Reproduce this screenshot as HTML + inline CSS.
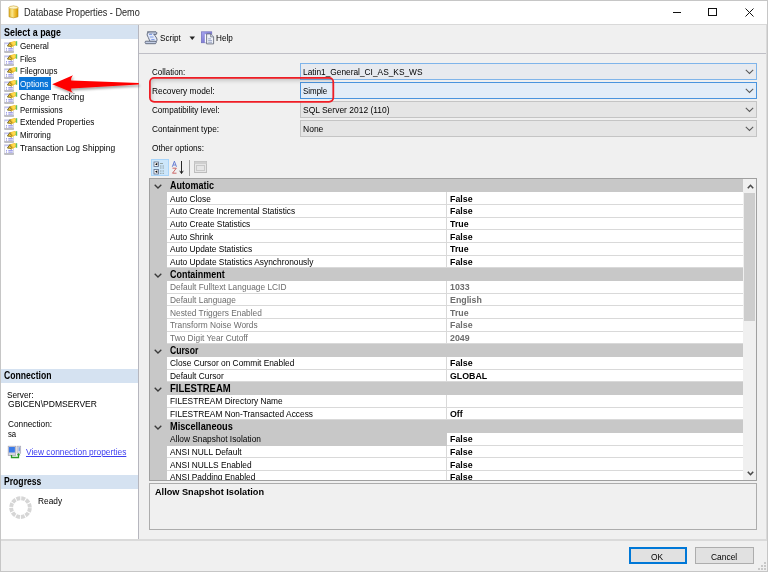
<!DOCTYPE html>
<html><head><meta charset="utf-8"><style>
*{margin:0;padding:0;box-sizing:border-box}
html,body{width:768px;height:572px;overflow:hidden;background:#f0f0f0;font-family:"Liberation Sans", sans-serif;color:#000;position:relative}
.a{position:absolute}
.t{position:absolute;white-space:nowrap;line-height:12px;transform-origin:0 0;color:#000}
.hdr{position:absolute;left:1px;width:137px;height:14px;background:#d5e2f1}
.combo{position:absolute;left:300px;width:457px;height:17px;border:1px solid #c4c4c4;background:#e5e5e5}
.combo.c1{border-color:#7eb4ea;background:#e7eaef}
.combo.c2{border-color:#4a94de;background:#e3edf8}
.combo svg{position:absolute;right:2px;top:5px}
#grid{position:absolute;left:149px;top:178px;width:608px;height:303px;border:1px solid #a0a0a0;background:#c8c8c8;overflow:hidden}
.cat{position:absolute;left:0;width:593px;height:12.7px;background:#c8c8c8}
.row{position:absolute;left:17px;width:576px;height:12.7px}
.row .lab{position:absolute;left:0;top:0;width:280px;height:100%;background:#fff;border-bottom:1px solid #d9d9d9;border-right:1px solid #d9d9d9}
.row .val{position:absolute;left:280px;top:0;width:296px;height:100%;background:#fff;border-bottom:1px solid #d9d9d9}
.row.sel .lab{background:#c8c8c8;border-bottom-color:#c8c8c8;border-right-color:#c8c8c8}
#sb{position:absolute;left:593px;top:0;width:14px;height:301px;background:#f0f0f0}
.btn{position:absolute;top:547px;height:17px;border:1px solid #adadad;background:#e1e1e1}
</style></head><body>
<div class="a" style="left:0;top:0;width:768px;height:572px;border:1px solid #c6c6c6"></div>
<svg class="a" style="left:757px;top:562px" width="10" height="9"><g fill="#c8c8c8"><rect x="7" y="0" width="2" height="2"/><rect x="4" y="3" width="2" height="2"/><rect x="7" y="3" width="2" height="2"/><rect x="1" y="6" width="2" height="2"/><rect x="4" y="6" width="2" height="2"/><rect x="7" y="6" width="2" height="2"/></g></svg>
<div class="a" style="left:1px;top:1px;width:766px;height:23px;background:#fff"></div>
<div class="a" style="left:1px;top:24px;width:766px;height:1px;background:#d9d9d9"></div>
<svg class="a" style="left:8px;top:5px" width="11" height="14" viewBox="0 0 11 14"><defs><linearGradient id="gd" x1="0" x2="1"><stop offset="0" stop-color="#e0b020"/><stop offset="0.35" stop-color="#fbe890"/><stop offset="0.6" stop-color="#f2c440"/><stop offset="1" stop-color="#d89a00"/></linearGradient></defs><path d="M1 2.2 Q5.5 0.2 10 2.2 V11.8 Q5.5 13.8 1 11.8 Z" fill="url(#gd)" stroke="#b88a10" stroke-width="0.6"/><ellipse cx="5.5" cy="2.4" rx="4.4" ry="1.5" fill="#fff6c8" stroke="#c09a30" stroke-width="0.4"/></svg>
<div class="t" style="left:23.5px;top:7px;font-size:10px;transform:scaleX(0.9139);color:#1e1e1e">Database Properties - Demo</div>
<div class="a" style="left:673px;top:12px;width:8px;height:1px;background:#111"></div>
<div class="a" style="left:708px;top:8px;width:9px;height:8px;border:1px solid #111"></div>
<svg class="a" style="left:745px;top:8px" width="9" height="9"><path d="M0.5 0.5 L8.5 8.5 M8.5 0.5 L0.5 8.5" stroke="#111" stroke-width="1"/></svg>

<div class="a" style="left:1px;top:25px;width:137px;height:514px;background:#fff"></div>
<div class="a" style="left:138px;top:25px;width:1px;height:515px;background:#b6b6be"></div>
<div class="a" style="left:1px;top:539px;width:766px;height:2px;background:#dadada"></div>
<div class="hdr" style="top:25px"></div>
<div class="t" style="left:3.5px;top:27px;font-size:10.2px;transform:scaleX(0.8743);font-weight:bold">Select a page</div>
<div class="a" style="left:4px;top:39px"><svg width="15" height="13" viewBox="0 0 15 13"><rect x="0.4" y="2.9" width="9.2" height="9.1" fill="#fdfdff" stroke="#cfd0da" stroke-width="0.8"/><rect x="0.5" y="2.7" width="4.5" height="1.5" fill="#c4c4f2"/><path d="M0.4 12 H9.8" stroke="#909096" stroke-width="1"/><path d="M2 8.6 H3 M4.3 8.6 H8.8 M2 10.3 H3 M4.3 10.3 H8.8" stroke="#a0a0ea" stroke-width="1.1"/><path d="M3.4 6 L6.2 2.2 L10.6 0.9 L12.7 2 L12.5 4.7 L9.6 6.3 L7.8 7.2 Z" fill="#f4c22e"/><path d="M3.4 6 L6.2 2.2 M3.4 6 L5.5 6.3 L7.8 7.2 M5.6 3 L8 5.8" fill="none" stroke="#6e6a30" stroke-width="0.9"/><path d="M8 2.6 L10.8 1.6 L12 3.2 L10 5.2 L8.6 4.8 Z" fill="#ffdc50"/><rect x="11.8" y="1.2" width="1.4" height="4.6" fill="#62c262"/></svg></div><div class="t" style="left:20.3px;top:40px;font-size:9.4px;transform:scaleX(0.8673)">General</div>
<div class="a" style="left:4px;top:52px"><svg width="15" height="13" viewBox="0 0 15 13"><rect x="0.4" y="2.9" width="9.2" height="9.1" fill="#fdfdff" stroke="#cfd0da" stroke-width="0.8"/><rect x="0.5" y="2.7" width="4.5" height="1.5" fill="#c4c4f2"/><path d="M0.4 12 H9.8" stroke="#909096" stroke-width="1"/><path d="M2 8.6 H3 M4.3 8.6 H8.8 M2 10.3 H3 M4.3 10.3 H8.8" stroke="#a0a0ea" stroke-width="1.1"/><path d="M3.4 6 L6.2 2.2 L10.6 0.9 L12.7 2 L12.5 4.7 L9.6 6.3 L7.8 7.2 Z" fill="#f4c22e"/><path d="M3.4 6 L6.2 2.2 M3.4 6 L5.5 6.3 L7.8 7.2 M5.6 3 L8 5.8" fill="none" stroke="#6e6a30" stroke-width="0.9"/><path d="M8 2.6 L10.8 1.6 L12 3.2 L10 5.2 L8.6 4.8 Z" fill="#ffdc50"/><rect x="11.8" y="1.2" width="1.4" height="4.6" fill="#62c262"/></svg></div><div class="t" style="left:20.3px;top:53px;font-size:9.4px;transform:scaleX(0.8163)">Files</div>
<div class="a" style="left:4px;top:65px"><svg width="15" height="13" viewBox="0 0 15 13"><rect x="0.4" y="2.9" width="9.2" height="9.1" fill="#fdfdff" stroke="#cfd0da" stroke-width="0.8"/><rect x="0.5" y="2.7" width="4.5" height="1.5" fill="#c4c4f2"/><path d="M0.4 12 H9.8" stroke="#909096" stroke-width="1"/><path d="M2 8.6 H3 M4.3 8.6 H8.8 M2 10.3 H3 M4.3 10.3 H8.8" stroke="#a0a0ea" stroke-width="1.1"/><path d="M3.4 6 L6.2 2.2 L10.6 0.9 L12.7 2 L12.5 4.7 L9.6 6.3 L7.8 7.2 Z" fill="#f4c22e"/><path d="M3.4 6 L6.2 2.2 M3.4 6 L5.5 6.3 L7.8 7.2 M5.6 3 L8 5.8" fill="none" stroke="#6e6a30" stroke-width="0.9"/><path d="M8 2.6 L10.8 1.6 L12 3.2 L10 5.2 L8.6 4.8 Z" fill="#ffdc50"/><rect x="11.8" y="1.2" width="1.4" height="4.6" fill="#62c262"/></svg></div><div class="t" style="left:20.3px;top:65px;font-size:9.4px;transform:scaleX(0.8545)">Filegroups</div>
<div class="a" style="left:4px;top:78px"><svg width="15" height="13" viewBox="0 0 15 13"><rect x="0.4" y="2.9" width="9.2" height="9.1" fill="#fdfdff" stroke="#cfd0da" stroke-width="0.8"/><rect x="0.5" y="2.7" width="4.5" height="1.5" fill="#c4c4f2"/><path d="M0.4 12 H9.8" stroke="#909096" stroke-width="1"/><path d="M2 8.6 H3 M4.3 8.6 H8.8 M2 10.3 H3 M4.3 10.3 H8.8" stroke="#a0a0ea" stroke-width="1.1"/><path d="M3.4 6 L6.2 2.2 L10.6 0.9 L12.7 2 L12.5 4.7 L9.6 6.3 L7.8 7.2 Z" fill="#f4c22e"/><path d="M3.4 6 L6.2 2.2 M3.4 6 L5.5 6.3 L7.8 7.2 M5.6 3 L8 5.8" fill="none" stroke="#6e6a30" stroke-width="0.9"/><path d="M8 2.6 L10.8 1.6 L12 3.2 L10 5.2 L8.6 4.8 Z" fill="#ffdc50"/><rect x="11.8" y="1.2" width="1.4" height="4.6" fill="#62c262"/></svg></div><div class="a" style="left:19px;top:77px;width:32px;height:13px;background:#0b76d8"></div><div class="t" style="left:20.3px;top:78px;font-size:9.4px;transform:scaleX(0.8736);color:#fff">Options</div>
<div class="a" style="left:4px;top:90px"><svg width="15" height="13" viewBox="0 0 15 13"><rect x="0.4" y="2.9" width="9.2" height="9.1" fill="#fdfdff" stroke="#cfd0da" stroke-width="0.8"/><rect x="0.5" y="2.7" width="4.5" height="1.5" fill="#c4c4f2"/><path d="M0.4 12 H9.8" stroke="#909096" stroke-width="1"/><path d="M2 8.6 H3 M4.3 8.6 H8.8 M2 10.3 H3 M4.3 10.3 H8.8" stroke="#a0a0ea" stroke-width="1.1"/><path d="M3.4 6 L6.2 2.2 L10.6 0.9 L12.7 2 L12.5 4.7 L9.6 6.3 L7.8 7.2 Z" fill="#f4c22e"/><path d="M3.4 6 L6.2 2.2 M3.4 6 L5.5 6.3 L7.8 7.2 M5.6 3 L8 5.8" fill="none" stroke="#6e6a30" stroke-width="0.9"/><path d="M8 2.6 L10.8 1.6 L12 3.2 L10 5.2 L8.6 4.8 Z" fill="#ffdc50"/><rect x="11.8" y="1.2" width="1.4" height="4.6" fill="#62c262"/></svg></div><div class="t" style="left:20.3px;top:91px;font-size:9.4px;transform:scaleX(0.9077)">Change Tracking</div>
<div class="a" style="left:4px;top:103px"><svg width="15" height="13" viewBox="0 0 15 13"><rect x="0.4" y="2.9" width="9.2" height="9.1" fill="#fdfdff" stroke="#cfd0da" stroke-width="0.8"/><rect x="0.5" y="2.7" width="4.5" height="1.5" fill="#c4c4f2"/><path d="M0.4 12 H9.8" stroke="#909096" stroke-width="1"/><path d="M2 8.6 H3 M4.3 8.6 H8.8 M2 10.3 H3 M4.3 10.3 H8.8" stroke="#a0a0ea" stroke-width="1.1"/><path d="M3.4 6 L6.2 2.2 L10.6 0.9 L12.7 2 L12.5 4.7 L9.6 6.3 L7.8 7.2 Z" fill="#f4c22e"/><path d="M3.4 6 L6.2 2.2 M3.4 6 L5.5 6.3 L7.8 7.2 M5.6 3 L8 5.8" fill="none" stroke="#6e6a30" stroke-width="0.9"/><path d="M8 2.6 L10.8 1.6 L12 3.2 L10 5.2 L8.6 4.8 Z" fill="#ffdc50"/><rect x="11.8" y="1.2" width="1.4" height="4.6" fill="#62c262"/></svg></div><div class="t" style="left:20.3px;top:104px;font-size:9.4px;transform:scaleX(0.8342)">Permissions</div>
<div class="a" style="left:4px;top:116px"><svg width="15" height="13" viewBox="0 0 15 13"><rect x="0.4" y="2.9" width="9.2" height="9.1" fill="#fdfdff" stroke="#cfd0da" stroke-width="0.8"/><rect x="0.5" y="2.7" width="4.5" height="1.5" fill="#c4c4f2"/><path d="M0.4 12 H9.8" stroke="#909096" stroke-width="1"/><path d="M2 8.6 H3 M4.3 8.6 H8.8 M2 10.3 H3 M4.3 10.3 H8.8" stroke="#a0a0ea" stroke-width="1.1"/><path d="M3.4 6 L6.2 2.2 L10.6 0.9 L12.7 2 L12.5 4.7 L9.6 6.3 L7.8 7.2 Z" fill="#f4c22e"/><path d="M3.4 6 L6.2 2.2 M3.4 6 L5.5 6.3 L7.8 7.2 M5.6 3 L8 5.8" fill="none" stroke="#6e6a30" stroke-width="0.9"/><path d="M8 2.6 L10.8 1.6 L12 3.2 L10 5.2 L8.6 4.8 Z" fill="#ffdc50"/><rect x="11.8" y="1.2" width="1.4" height="4.6" fill="#62c262"/></svg></div><div class="t" style="left:20.3px;top:116px;font-size:9.4px;transform:scaleX(0.8747)">Extended Properties</div>
<div class="a" style="left:4px;top:129px"><svg width="15" height="13" viewBox="0 0 15 13"><rect x="0.4" y="2.9" width="9.2" height="9.1" fill="#fdfdff" stroke="#cfd0da" stroke-width="0.8"/><rect x="0.5" y="2.7" width="4.5" height="1.5" fill="#c4c4f2"/><path d="M0.4 12 H9.8" stroke="#909096" stroke-width="1"/><path d="M2 8.6 H3 M4.3 8.6 H8.8 M2 10.3 H3 M4.3 10.3 H8.8" stroke="#a0a0ea" stroke-width="1.1"/><path d="M3.4 6 L6.2 2.2 L10.6 0.9 L12.7 2 L12.5 4.7 L9.6 6.3 L7.8 7.2 Z" fill="#f4c22e"/><path d="M3.4 6 L6.2 2.2 M3.4 6 L5.5 6.3 L7.8 7.2 M5.6 3 L8 5.8" fill="none" stroke="#6e6a30" stroke-width="0.9"/><path d="M8 2.6 L10.8 1.6 L12 3.2 L10 5.2 L8.6 4.8 Z" fill="#ffdc50"/><rect x="11.8" y="1.2" width="1.4" height="4.6" fill="#62c262"/></svg></div><div class="t" style="left:20.3px;top:129px;font-size:9.4px;transform:scaleX(0.8307)">Mirroring</div>
<div class="a" style="left:4px;top:141px"><svg width="15" height="13" viewBox="0 0 15 13"><rect x="0.4" y="2.9" width="9.2" height="9.1" fill="#fdfdff" stroke="#cfd0da" stroke-width="0.8"/><rect x="0.5" y="2.7" width="4.5" height="1.5" fill="#c4c4f2"/><path d="M0.4 12 H9.8" stroke="#909096" stroke-width="1"/><path d="M2 8.6 H3 M4.3 8.6 H8.8 M2 10.3 H3 M4.3 10.3 H8.8" stroke="#a0a0ea" stroke-width="1.1"/><path d="M3.4 6 L6.2 2.2 L10.6 0.9 L12.7 2 L12.5 4.7 L9.6 6.3 L7.8 7.2 Z" fill="#f4c22e"/><path d="M3.4 6 L6.2 2.2 M3.4 6 L5.5 6.3 L7.8 7.2 M5.6 3 L8 5.8" fill="none" stroke="#6e6a30" stroke-width="0.9"/><path d="M8 2.6 L10.8 1.6 L12 3.2 L10 5.2 L8.6 4.8 Z" fill="#ffdc50"/><rect x="11.8" y="1.2" width="1.4" height="4.6" fill="#62c262"/></svg></div><div class="t" style="left:20.3px;top:142px;font-size:9.4px;transform:scaleX(0.897)">Transaction Log Shipping</div>
<div class="hdr" style="top:369px"></div>
<div class="t" style="left:3.5px;top:370px;font-size:10.2px;transform:scaleX(0.8468);font-weight:bold">Connection</div>
<div class="t" style="left:7.2px;top:389px;font-size:9.4px;transform:scaleX(0.8813)">Server:</div>
<div class="t" style="left:8px;top:398px;font-size:9.4px;transform:scaleX(0.91)">GBICEN\PDMSERVER</div>
<div class="t" style="left:8px;top:418px;font-size:9.4px;transform:scaleX(0.8811)">Connection:</div>
<div class="t" style="left:8px;top:428px;font-size:9.4px;transform:scaleX(0.826)">sa</div>
<svg class="a" style="left:7px;top:445px" width="15" height="14" viewBox="0 0 15 14"><rect x="1.2" y="1.2" width="7.5" height="9.4" fill="#d6d6de" stroke="#a4a4b4" stroke-width="0.7"/><rect x="1.9" y="2" width="6" height="5.5" fill="#3a7ae8"/><rect x="10" y="1.2" width="3.7" height="7" fill="#dcdce6" stroke="#a8a8b8" stroke-width="0.7"/><rect x="11.6" y="2.2" width="1.3" height="4" fill="#7aa0e0"/><path d="M4.5 10 V12.5 H11.5 V9.5" fill="none" stroke="#2a9a2a" stroke-width="1.3"/><path d="M9.6 10.2 L11.5 8 L13.4 10.2 Z" fill="#2a9a2a"/></svg>
<div class="t" style="left:26.3px;top:446px;font-size:9.4px;transform:scaleX(0.8927);color:#3c3cf0;text-decoration:underline">View connection properties</div>
<div class="hdr" style="top:475px"></div>
<div class="t" style="left:3.5px;top:476px;font-size:10.2px;transform:scaleX(0.8458);font-weight:bold">Progress</div>
<svg class="a" style="left:8px;top:495px" width="26" height="26" viewBox="0 0 26 26"><circle cx="12.5" cy="12.6" r="9.35" fill="none" stroke="#d6d6d6" stroke-width="3.9" stroke-dasharray="3.9 0.996" stroke-dashoffset="-0.5"/></svg>
<div class="t" style="left:37.8px;top:495px;font-size:9.4px;transform:scaleX(0.887)">Ready</div>

<div class="a" style="left:766px;top:25px;width:1px;height:515px;background:#dadada"></div>
<div class="a" style="left:139px;top:53px;width:627px;height:1px;background:#bfbfc6"></div>
<svg class="a" style="left:144px;top:30px" width="15" height="15" viewBox="0 0 15 15"><path d="M3.5 2.5 Q2.3 5 4.3 7.5 L6 11.5 H12.5 Q13.6 10 12.6 8 L9.5 3.5 Z" fill="#e2e9fa" stroke="#5b6478" stroke-width="0.9"/><path d="M3.2 1.8 H12 Q13.8 2.6 12.3 4.4 H9.6" fill="#b8c4dc" stroke="#5b6478" stroke-width="0.9"/><path d="M1.5 11.2 H11.5 Q13 12.5 11.5 13.7 H1.7 Q0.6 12.4 1.5 11.2 Z" fill="#c4cfe6" stroke="#5b6478" stroke-width="0.9"/><path d="M5 4.5 H8 M5.8 7 H9.5 M7.3 9.5 H10.5" stroke="#6a8ae0" stroke-width="0.8"/></svg>
<div class="t" style="left:160.2px;top:32px;font-size:9.4px;transform:scaleX(0.8657)">Script</div>
<svg class="a" style="left:189px;top:36px" width="7" height="5"><path d="M0.5 0.5 H6 L3.25 4 Z" fill="#222"/></svg>
<svg class="a" style="left:200px;top:30px" width="15" height="15" viewBox="0 0 15 15"><defs><linearGradient id="gb" x1="0" y1="0" x2="1" y2="1"><stop offset="0" stop-color="#a8a6f0"/><stop offset="1" stop-color="#6462c0"/></linearGradient></defs><rect x="1.3" y="1.8" width="10.5" height="11" fill="url(#gb)" stroke="#6a68b8" stroke-width="0.6"/><rect x="4.8" y="4.2" width="2.6" height="8.4" fill="#fafaff"/><path d="M6.6 3.9 H10.6 L13.6 6.9 V13.9 H6.6 Z" fill="#eef1f8" stroke="#596070" stroke-width="0.8"/><path d="M10.6 3.9 V6.9 H13.6" fill="#d0d6e4" stroke="#596070" stroke-width="0.6"/><path d="M8.2 8.8 H11 M8.2 10.6 H12 M8.2 12.3 H12" stroke="#8a96bc" stroke-width="0.8"/></svg>
<div class="t" style="left:215.8px;top:32px;font-size:9.4px;transform:scaleX(0.869)">Help</div>

<div class="t" style="left:151.5px;top:66px;font-size:9.4px;transform:scaleX(0.8498)">Collation:</div>
<div class="t" style="left:152px;top:85px;font-size:9.4px;transform:scaleX(0.8905)">Recovery model:</div>
<div class="t" style="left:151.5px;top:104px;font-size:9.4px;transform:scaleX(0.8652)">Compatibility level:</div>
<div class="t" style="left:151.5px;top:123px;font-size:9.4px;transform:scaleX(0.8809)">Containment type:</div>
<div class="t" style="left:151.5px;top:142px;font-size:9.4px;transform:scaleX(0.8842)">Other options:</div>
<div class="combo c1" style="top:63px"><svg width="9" height="6"><path d="M0.8 0.8 L4.5 4.4 L8.2 0.8" fill="none" stroke="#5a5a5a" stroke-width="1.05"/></svg></div>
<div class="combo c2" style="top:82px"><svg width="9" height="6"><path d="M0.8 0.8 L4.5 4.4 L8.2 0.8" fill="none" stroke="#5a5a5a" stroke-width="1.05"/></svg></div>
<div class="combo" style="top:101px"><svg width="9" height="6"><path d="M0.8 0.8 L4.5 4.4 L8.2 0.8" fill="none" stroke="#5a5a5a" stroke-width="1.05"/></svg></div>
<div class="combo" style="top:120px"><svg width="9" height="6"><path d="M0.8 0.8 L4.5 4.4 L8.2 0.8" fill="none" stroke="#5a5a5a" stroke-width="1.05"/></svg></div>
<div class="t" style="left:302.8px;top:66px;font-size:9.4px;transform:scaleX(0.8887)">Latin1_General_CI_AS_KS_WS</div>
<div class="t" style="left:303px;top:85px;font-size:9.4px;transform:scaleX(0.8458)">Simple</div>
<div class="t" style="left:302.8px;top:104px;font-size:9.4px;transform:scaleX(0.9029)">SQL Server 2012 (110)</div>
<div class="t" style="left:302.8px;top:123px;font-size:9.4px;transform:scaleX(0.9079)">None</div>
<div class="a" style="left:150px;top:78px;width:183px;height:23.5px;border-radius:4px;box-shadow:inset 1.5px 2.5px 4px rgba(0,0,0,0.2)"></div><svg class="a" style="left:145px;top:73px" width="195" height="35"><rect x="4.9" y="4.9" width="183.4" height="23.9" rx="4.2" fill="none" stroke="#ef1d25" stroke-width="1.8"/></svg>
<svg class="a" style="left:50px;top:73px" width="95" height="24" viewBox="50 73 95 24"><defs><filter id="sh" x="-10%" y="-30%" width="130%" height="180%"><feDropShadow dx="1" dy="2" stdDeviation="1.2" flood-color="#000" flood-opacity="0.35"/></filter></defs><path d="M52.2 84.3 L73 75.2 Q70.5 78.5 71.2 80.6 L138.8 83 L138.8 84.6 L71.2 88.5 Q70.5 90.5 73 92.8 Z" fill="#ff0000" filter="url(#sh)"/></svg>

<div class="a" style="left:151px;top:159px;width:18px;height:17px;background:#cce6fb;border:1px solid #a8d4fa"></div>
<svg class="a" style="left:153px;top:161px" width="14" height="14" viewBox="0 0 14 14"><rect x="1" y="1" width="4.5" height="4.5" fill="#fff" stroke="#5a6a8a" stroke-width="0.8"/><path d="M2 3.2 L4.3 1.8 V4.6 Z" fill="#000"/><rect x="1" y="8.5" width="4.5" height="4.5" fill="#fff" stroke="#5a6a8a" stroke-width="0.8"/><path d="M2 10.7 L4.3 9.3 V12.1 Z" fill="#000"/><path d="M7 2.5 H10 M7 5 H8.5 M9.5 5 H11 M7 7 H8.5 M9.5 7 H11 M7 10 H8.5 M9.5 10 H11 M7 12.3 H8.5 M9.5 12.3 H11" stroke="#8a9a9a" stroke-width="0.9"/></svg>
<svg class="a" style="left:171px;top:160px" width="14" height="15" viewBox="0 0 14 15"><path d="M1.3 6.8 L3.4 1.2 L5.5 6.8 M2.1 5 H4.7" fill="none" stroke="#4a66cc" stroke-width="0.8"/><path d="M1.5 8.2 H5.3 L1.5 13.2 H5.5" fill="none" stroke="#c44848" stroke-width="0.8"/><path d="M10.5 1 V13" stroke="#111" stroke-width="0.9"/><path d="M8.8 10.8 L10.5 13.6 L12.2 10.8" fill="none" stroke="#111" stroke-width="0.9"/></svg>
<div class="a" style="left:189px;top:160px;width:1px;height:16px;background:#a4a4a4"></div>
<svg class="a" style="left:194px;top:161px" width="14" height="13" viewBox="0 0 14 13"><rect x="0.5" y="0.5" width="12" height="11" fill="#e6e6e6" stroke="#bdbdbd"/><rect x="0.5" y="0.5" width="12" height="2.5" fill="#cfcfcf"/><rect x="2.5" y="4.5" width="8" height="5" fill="none" stroke="#c8c8c8"/></svg>
<div id="grid">
<div class="cat" style="top:1px;height:12px"></div>
<div class="row" style="top:13px;height:13px"><span class="lab"></span><span class="val"></span></div>
<div class="row" style="top:26px;height:13px"><span class="lab"></span><span class="val"></span></div>
<div class="row" style="top:39px;height:12px"><span class="lab"></span><span class="val"></span></div>
<div class="row" style="top:51px;height:13px"><span class="lab"></span><span class="val"></span></div>
<div class="row" style="top:64px;height:13px"><span class="lab"></span><span class="val"></span></div>
<div class="row" style="top:77px;height:12px"><span class="lab"></span><span class="val"></span></div>
<div class="cat" style="top:89px;height:13px"></div>
<div class="row" style="top:102px;height:13px"><span class="lab"></span><span class="val"></span></div>
<div class="row" style="top:115px;height:12px"><span class="lab"></span><span class="val"></span></div>
<div class="row" style="top:127px;height:13px"><span class="lab"></span><span class="val"></span></div>
<div class="row" style="top:140px;height:13px"><span class="lab"></span><span class="val"></span></div>
<div class="row" style="top:153px;height:12px"><span class="lab"></span><span class="val"></span></div>
<div class="cat" style="top:165px;height:13px"></div>
<div class="row" style="top:178px;height:13px"><span class="lab"></span><span class="val"></span></div>
<div class="row" style="top:191px;height:12px"><span class="lab"></span><span class="val"></span></div>
<div class="cat" style="top:203px;height:13px"></div>
<div class="row" style="top:216px;height:13px"><span class="lab"></span><span class="val"></span></div>
<div class="row" style="top:229px;height:12px"><span class="lab"></span><span class="val"></span></div>
<div class="cat" style="top:241px;height:13px"></div>
<div class="row sel" style="top:254px;height:13px"><span class="lab"></span><span class="val"></span></div>
<div class="row" style="top:267px;height:12px"><span class="lab"></span><span class="val"></span></div>
<div class="row" style="top:279px;height:13px"><span class="lab"></span><span class="val"></span></div>
<div class="row" style="top:292px;height:13px"><span class="lab"></span><span class="val"></span></div>
<svg class="a" style="left:4px;top:5px" width="8" height="5"><path d="M0.7 0.7 L4 4 L7.3 0.7" fill="none" stroke="#3a3a3a" stroke-width="1.3"/></svg>
<div class="t" style="left:19.80000000000001px;top:1px;font-size:10.2px;transform:scaleX(0.8823);font-weight:bold">Automatic</div>
<div class="t" style="left:19.80000000000001px;top:14px;font-size:9.4px;transform:scaleX(0.89)">Auto Close</div>
<div class="t" style="left:300px;top:14px;font-size:9.4px;transform:scaleX(0.9403);font-weight:bold">False</div>
<div class="t" style="left:19.80000000000001px;top:26px;font-size:9.4px;transform:scaleX(0.8825)">Auto Create Incremental Statistics</div>
<div class="t" style="left:300px;top:26px;font-size:9.4px;transform:scaleX(0.9403);font-weight:bold">False</div>
<div class="t" style="left:19.80000000000001px;top:39px;font-size:9.4px;transform:scaleX(0.89)">Auto Create Statistics</div>
<div class="t" style="left:300px;top:39px;font-size:9.4px;transform:scaleX(0.9403);font-weight:bold">True</div>
<div class="t" style="left:19.80000000000001px;top:52px;font-size:9.4px;transform:scaleX(0.89)">Auto Shrink</div>
<div class="t" style="left:300px;top:52px;font-size:9.4px;transform:scaleX(0.9403);font-weight:bold">False</div>
<div class="t" style="left:19.80000000000001px;top:64px;font-size:9.4px;transform:scaleX(0.89)">Auto Update Statistics</div>
<div class="t" style="left:300px;top:64px;font-size:9.4px;transform:scaleX(0.9403);font-weight:bold">True</div>
<div class="t" style="left:19.80000000000001px;top:77px;font-size:9.4px;transform:scaleX(0.893)">Auto Update Statistics Asynchronously</div>
<div class="t" style="left:300px;top:77px;font-size:9.4px;transform:scaleX(0.9403);font-weight:bold">False</div>
<svg class="a" style="left:4px;top:94px" width="8" height="5"><path d="M0.7 0.7 L4 4 L7.3 0.7" fill="none" stroke="#3a3a3a" stroke-width="1.3"/></svg>
<div class="t" style="left:19.80000000000001px;top:90px;font-size:10.2px;transform:scaleX(0.8776);font-weight:bold">Containment</div>
<div class="t" style="left:19.80000000000001px;top:102px;font-size:9.4px;transform:scaleX(0.89);color:#6d6d6d">Default Fulltext Language LCID</div>
<div class="t" style="left:300px;top:102px;font-size:9.4px;transform:scaleX(0.9403);font-weight:bold;color:#6d6d6d">1033</div>
<div class="t" style="left:19.80000000000001px;top:115px;font-size:9.4px;transform:scaleX(0.89);color:#6d6d6d">Default Language</div>
<div class="t" style="left:300px;top:115px;font-size:9.4px;transform:scaleX(0.9403);font-weight:bold;color:#6d6d6d">English</div>
<div class="t" style="left:19.80000000000001px;top:128px;font-size:9.4px;transform:scaleX(0.89);color:#6d6d6d">Nested Triggers Enabled</div>
<div class="t" style="left:300px;top:128px;font-size:9.4px;transform:scaleX(0.9403);font-weight:bold;color:#6d6d6d">True</div>
<div class="t" style="left:19.80000000000001px;top:140px;font-size:9.4px;transform:scaleX(0.89);color:#6d6d6d">Transform Noise Words</div>
<div class="t" style="left:300px;top:140px;font-size:9.4px;transform:scaleX(0.9403);font-weight:bold;color:#6d6d6d">False</div>
<div class="t" style="left:19.80000000000001px;top:153px;font-size:9.4px;transform:scaleX(0.89);color:#6d6d6d">Two Digit Year Cutoff</div>
<div class="t" style="left:300px;top:153px;font-size:9.4px;transform:scaleX(0.9403);font-weight:bold;color:#6d6d6d">2049</div>
<svg class="a" style="left:4px;top:170px" width="8" height="5"><path d="M0.7 0.7 L4 4 L7.3 0.7" fill="none" stroke="#3a3a3a" stroke-width="1.3"/></svg>
<div class="t" style="left:19.80000000000001px;top:166px;font-size:10.2px;transform:scaleX(0.8463);font-weight:bold">Cursor</div>
<div class="t" style="left:19.80000000000001px;top:178px;font-size:9.4px;transform:scaleX(0.89)">Close Cursor on Commit Enabled</div>
<div class="t" style="left:300px;top:178px;font-size:9.4px;transform:scaleX(0.9403);font-weight:bold">False</div>
<div class="t" style="left:19.80000000000001px;top:191px;font-size:9.4px;transform:scaleX(0.89)">Default Cursor</div>
<div class="t" style="left:300px;top:191px;font-size:9.4px;transform:scaleX(0.9403);font-weight:bold">GLOBAL</div>
<svg class="a" style="left:4px;top:208px" width="8" height="5"><path d="M0.7 0.7 L4 4 L7.3 0.7" fill="none" stroke="#3a3a3a" stroke-width="1.3"/></svg>
<div class="t" style="left:19.80000000000001px;top:204px;font-size:10.2px;transform:scaleX(0.933);font-weight:bold">FILESTREAM</div>
<div class="t" style="left:19.80000000000001px;top:216px;font-size:9.4px;transform:scaleX(0.89)">FILESTREAM Directory Name</div>
<div class="t" style="left:19.80000000000001px;top:229px;font-size:9.4px;transform:scaleX(0.89)">FILESTREAM Non-Transacted Access</div>
<div class="t" style="left:300px;top:229px;font-size:9.4px;transform:scaleX(0.9403);font-weight:bold">Off</div>
<svg class="a" style="left:4px;top:246px" width="8" height="5"><path d="M0.7 0.7 L4 4 L7.3 0.7" fill="none" stroke="#3a3a3a" stroke-width="1.3"/></svg>
<div class="t" style="left:19.80000000000001px;top:242px;font-size:10.2px;transform:scaleX(0.9022);font-weight:bold">Miscellaneous</div>
<div class="t" style="left:19.80000000000001px;top:254px;font-size:9.4px;transform:scaleX(0.89)">Allow Snapshot Isolation</div>
<div class="t" style="left:300px;top:254px;font-size:9.4px;transform:scaleX(0.9403);font-weight:bold">False</div>
<div class="t" style="left:19.80000000000001px;top:267px;font-size:9.4px;transform:scaleX(0.89)">ANSI NULL Default</div>
<div class="t" style="left:300px;top:267px;font-size:9.4px;transform:scaleX(0.9403);font-weight:bold">False</div>
<div class="t" style="left:19.80000000000001px;top:280px;font-size:9.4px;transform:scaleX(0.89)">ANSI NULLS Enabled</div>
<div class="t" style="left:300px;top:280px;font-size:9.4px;transform:scaleX(0.9403);font-weight:bold">False</div>
<div class="t" style="left:19.80000000000001px;top:292px;font-size:9.4px;transform:scaleX(0.89)">ANSI Padding Enabled</div>
<div class="t" style="left:300px;top:292px;font-size:9.4px;transform:scaleX(0.9403);font-weight:bold">False</div>
<div id="sb"><svg class="a" style="left:3.5px;top:5px" width="8" height="5"><path d="M0.8 4.2 L3.5 1.3 L6.2 4.2" fill="none" stroke="#4a4a4a" stroke-width="1.6"/></svg>
<div class="a" style="left:1px;top:14px;width:11px;height:128px;background:#cdcdcd"></div>
<svg class="a" style="left:3.5px;top:292px" width="8" height="5"><path d="M0.8 0.8 L3.5 3.7 L6.2 0.8" fill="none" stroke="#4a4a4a" stroke-width="1.6"/></svg></div>
</div>
<div class="a" style="left:149px;top:483px;width:608px;height:47px;border:1px solid #acacac;background:#f0f0f0"></div>
<div class="t" style="left:154.5px;top:486px;font-size:9.8px;transform:scaleX(0.9356);font-weight:bold">Allow Snapshot Isolation</div>
<div class="btn" style="left:629px;width:58px;border:2px solid #0078d7"></div>
<div class="btn" style="left:695px;width:59px"></div>
<div class="t" style="left:651px;top:551px;font-size:9.4px;transform:scaleX(0.8909)">OK</div>
<div class="t" style="left:710.5px;top:551px;font-size:9.4px;transform:scaleX(0.8989)">Cancel</div>
</body></html>
